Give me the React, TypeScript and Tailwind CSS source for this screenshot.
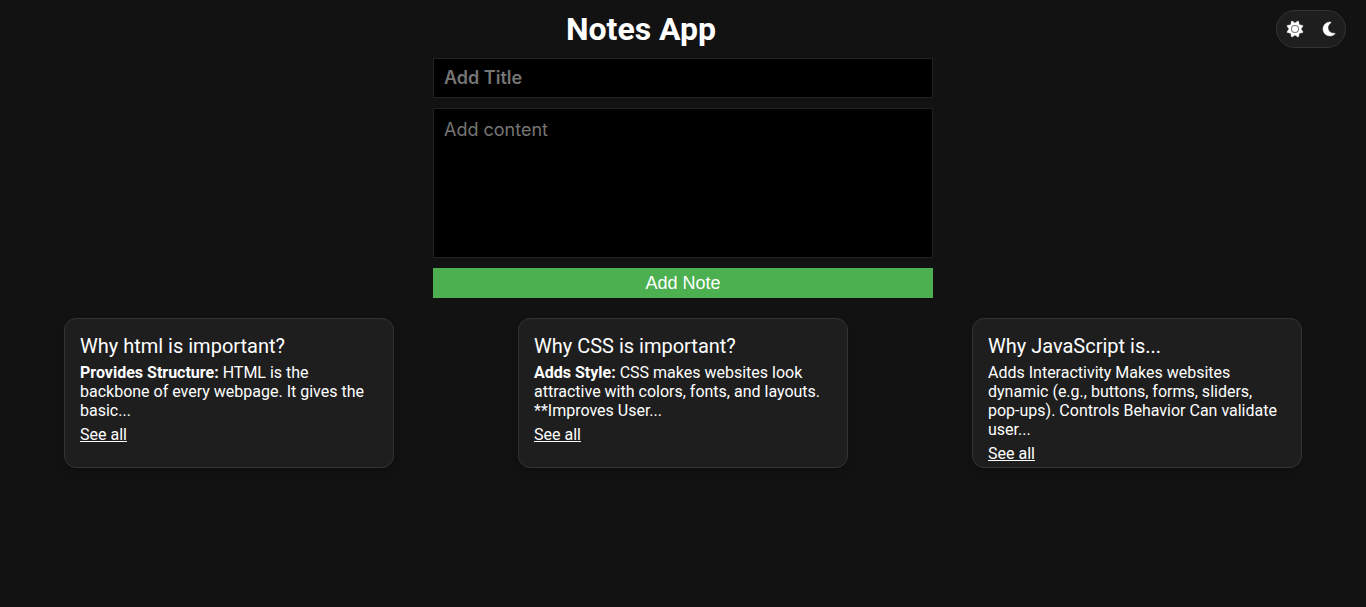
import { useState } from 'react';
import type { ReactNode } from 'react';

type Note = { title: string; body: ReactNode };

const notes: Note[] = [
  {
    title: 'Why html is important?',
    body: (
      <>
        <strong className="font-bold">Provides Structure:</strong> HTML is the backbone of every webpage. It gives the basic...
      </>
    ),
  },
  {
    title: 'Why CSS is important?',
    body: (
      <>
        <strong className="font-bold">Adds Style:</strong> CSS makes websites look attractive with colors, fonts, and layouts. **Improves User...
      </>
    ),
  },
  {
    title: 'Why JavaScript is...',
    body: 'Adds Interactivity Makes websites dynamic (e.g., buttons, forms, sliders, pop-ups). Controls Behavior Can validate user...',
  },
];

function SunIcon() {
  return (
    <svg viewBox="0 0 512 512" className="size-4 overflow-visible" fill="currentColor" stroke="currentColor" strokeWidth="14" aria-hidden="true">
      <path d="M361.5 1.2c5 2.1 8.6 6.600 9.600 11.900L391 121l107.900 19.800c5.300 1 9.800 4.600 11.900 9.600s1.500 10.700-1.600 15.200L446.900 256l62.300 90.300c3.100 4.500 3.700 10.200 1.600 15.200s-6.600 8.600-11.900 9.600L391 391 371.100 498.900c-1 5.300-4.600 9.800-9.600 11.900s-10.700 1.500-15.200-1.600L256 446.900l-90.300 62.300c-4.500 3.100-10.200 3.700-15.200 1.600s-8.600-6.600-9.600-11.900L121 391 13.100 371.100c-5.300-1-9.800-4.600-11.900-9.600s-1.500-10.700 1.600-15.200L65.100 256 2.800 165.700c-3.100-4.500-3.700-10.200-1.600-15.200s6.600-8.600 11.900-9.600L121 121 140.900 13.100c1-5.300 4.600-9.800 9.600-11.900s10.700-1.500 15.200 1.600L256 65.100 346.300 2.800c4.500-3.100 10.200-3.700 15.200-1.600zM160 256a96 96 0 1 1 192 0 96 96 0 1 1 -192 0zm224 0a128 128 0 1 0 -256 0 128 128 0 1 0 256 0z" />
    </svg>
  );
}

function MoonIcon() {
  return (
    <svg viewBox="0 0 384 512" className="h-4 w-3 overflow-visible" fill="currentColor" stroke="currentColor" strokeWidth="14" aria-hidden="true">
      <path d="M223.500 32C100 32 0 132.300 0 256S100 480 223.500 480c60.600 0 115.500-24.200 155.800-63.400c5-4.900 6.300-12.500 3.100-18.700s-10.100-9.700-17-8.500c-9.800 1.700-19.800 2.600-30.100 2.600c-96.900 0-175.500-78.800-175.500-176c0-65.800 36-123.100 89.300-153.300c6.100-3.500 9.200-10.500 7.700-17.300s-7.300-11.900-14.300-12.500c-6.300-.5-12.600-.8-19-.8z" />
    </svg>
  );
}

export default function App() {
  const [title, setTitle] = useState('');
  const [content, setContent] = useState('');

  return (
    <div className="min-h-screen bg-[#121212] font-['Roboto',sans-serif] text-white">
      <header className="flex items-start pt-2.5 pr-5 pl-1.5">
        <h1 className="flex-1 text-center text-[32px] leading-[38px] font-bold">Notes App</h1>
        <div className="flex h-[38px] w-[70px] items-center justify-between rounded-full border border-[#333] bg-[#1e1e1e] px-2.5">
          <button type="button" aria-label="Light theme" className="cursor-pointer">
            <SunIcon />
          </button>
          <button type="button" aria-label="Dark theme" className="cursor-pointer">
            <MoonIcon />
          </button>
        </div>
      </header>

      <main>
        <form className="mx-auto mt-2.5 flex max-w-[500px] flex-col gap-2.5" onSubmit={(e) => e.preventDefault()}>
          <input
            type="text"
            aria-label="Title"
            placeholder="Add Title"
            value={title}
            onChange={(e) => setTitle(e.target.value)}
            className="h-10 border border-[#222] bg-black px-2.5 pb-0.5 font-['Inter',sans-serif] text-lg leading-[22px] font-semibold outline-none placeholder:text-[#757575]"
          />
          <textarea
            aria-label="Content"
            placeholder="Add content"
            value={content}
            onChange={(e) => setContent(e.target.value)}
            className="h-[150px] resize-none border border-[#222] bg-black p-2.5 font-['Inter',sans-serif] text-lg leading-[22px] outline-none placeholder:text-[#757575]"
          />
          <button
            type="submit"
            className="h-[30px] cursor-pointer bg-[#4caf50] font-['Liberation_Sans',sans-serif] text-lg leading-5"
          >
            Add Note
          </button>
        </form>

        <section className="mt-5 flex flex-wrap justify-between gap-5 px-16" aria-label="Notes">
          {notes.map((note) => (
            <article
              key={note.title}
              className="h-[150px] w-[330px] rounded-xl border border-[#333] bg-[#1e1e1e] p-[15px] shadow-[0_4px_8px_rgba(0,0,0,0.2)]"
            >
              <h2 className="text-xl leading-6">{note.title}</h2>
              <p className="mt-[5px] text-base leading-[19px]">{note.body}</p>
              <a href="#" className="mt-[5px] block w-fit text-base leading-[19px] underline">
                See all
              </a>
            </article>
          ))}
        </section>
      </main>
    </div>
  );
}
